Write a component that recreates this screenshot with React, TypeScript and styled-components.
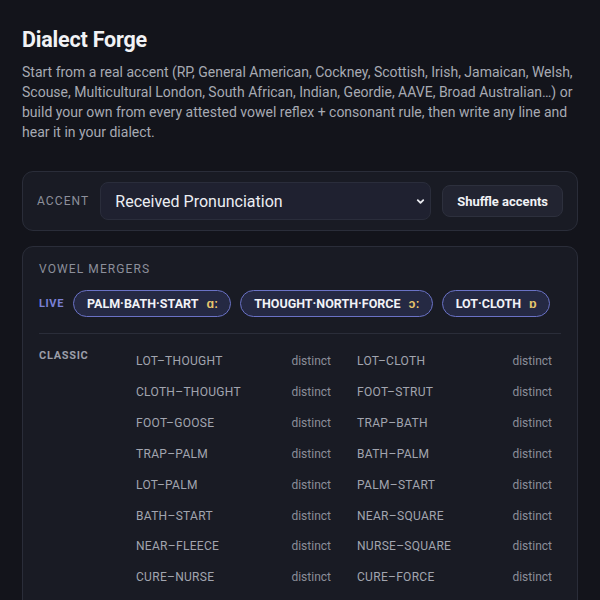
import React from "react";
import styled, { createGlobalStyle } from "styled-components";

const Global = createGlobalStyle`
  html, body { margin: 0; padding: 0; background: #13141b; }
  body { font-family: Roboto, "Liberation Sans", sans-serif; color: #e8e9ee; }
  * { box-sizing: border-box; }
`;

const Page = styled.div`
  padding: 26px 22px 0 22px;
  min-height: 600px;
  background: #13141b;
`;

const Title = styled.h1`
  margin: 0;
  font-size: 21.5px;
  line-height: 28px;
  font-weight: 700;
  color: #f1f2f5;
  letter-spacing: -0.2px;
`;

const Intro = styled.p`
  margin: 8px 0 0 0;
  font-size: 14px;
  line-height: 20px;
  color: #a7aab3;
  max-width: 556px;
`;

const Card = styled.section`
  background: #191b24;
  border: 1px solid #2a2d39;
  border-radius: 11px;
`;

const AccentCard = styled(Card)`
  margin-top: 29px;
  display: flex;
  align-items: center;
  gap: 11px;
  padding: 10px 14px 10px 14px;
`;

const Label = styled.span`
  font-size: 12px;
  letter-spacing: 1.1px;
  color: #8c8f9b;
  text-transform: uppercase;
`;

const SelectBox = styled.div`
  flex: 1;
  height: 38px;
  display: flex;
  align-items: center;
  justify-content: space-between;
  padding: 0 4px 0 14px;
  background: #1f2130;
  border: 1px solid #2a2d3b;
  border-radius: 8px;
  font-size: 16px;
  color: #eceef3;
`;

const Button = styled.button`
  height: 32px;
  padding: 0 14px;
  background: #222431;
  border: 1px solid #2d303d;
  border-radius: 8px;
  font-family: inherit;
  font-size: 13px;
  font-weight: 700;
  color: #f1f2f5;
`;

const MergerCard = styled(Card)`
  margin-top: 15px;
  padding: 15px 16px 20px 16px;
`;

const SectionTitle = styled.div`
  font-size: 12px;
  letter-spacing: 1.1px;
  color: #8c8f9b;
  line-height: 14px;
`;

const LiveRow = styled.div`
  margin-top: 14px;
  display: flex;
  align-items: center;
  gap: 9px;
  padding-bottom: 16px;
  border-bottom: 1px solid #2a2d39;
`;

const LiveTag = styled.span`
  font-size: 11px;
  font-weight: 700;
  letter-spacing: 0.6px;
  color: #7a80d6;
`;

const Pill = styled.span`
  height: 27px;
  display: inline-flex;
  align-items: center;
  gap: 8px;
  padding: 0 12px 0 13px;
  background: #252943;
  border: 1.5px solid #6a72c6;
  border-radius: 14px;
  font-size: 12.5px;
  font-weight: 700;
  letter-spacing: 0;
  color: #f1f2f7;
`;

const Ipa = styled.span`
  color: #e6c56c;
  font-weight: 700;
`;

const Classic = styled.div`
  display: grid;
  grid-template-columns: 97px 1fr;
  padding-top: 12px;
`;

const ClassicLabel = styled.div`
  font-size: 11px;
  font-weight: 700;
  letter-spacing: 0.7px;
  color: #9b9ea9;
  line-height: 14px;
  padding-top: 3px;
`;

const PairGrid = styled.div`
  display: grid;
  grid-template-columns: 195px 195px;
  grid-auto-rows: 30.85px;
  column-gap: 26px;
`;

const Pair = styled.div`
  display: flex;
  align-items: center;
  justify-content: space-between;
  font-size: 12px;
`;

const PairName = styled.span`
  color: #a2a5af;
  letter-spacing: 0.3px;
`;

const Status = styled.span`
  color: #8b8e99;
`;

const pairs: [string, string][] = [
  ["LOT–THOUGHT", "LOT–CLOTH"],
  ["CLOTH–THOUGHT", "FOOT–STRUT"],
  ["FOOT–GOOSE", "TRAP–BATH"],
  ["TRAP–PALM", "BATH–PALM"],
  ["LOT–PALM", "PALM–START"],
  ["BATH–START", "NEAR–SQUARE"],
  ["NEAR–FLEECE", "NURSE–SQUARE"],
  ["CURE–NURSE", "CURE–FORCE"],
];

const live = [
  { name: "PALM·BATH·START", ipa: "ɑː" },
  { name: "THOUGHT·NORTH·FORCE", ipa: "ɔː" },
  { name: "LOT·CLOTH", ipa: "ɒ" },
];

const Chevron = () => (
  <svg width="11" height="11" viewBox="0 0 24 24" fill="none" stroke="#e8e9ee" strokeWidth="4" strokeLinecap="round" strokeLinejoin="round">
    <path d="M6 9l6 6 6-6" />
  </svg>
);

export default function App() {
  return (
    <Page>
      <Global />
      <Title>Dialect Forge</Title>
      <Intro>
        Start from a real accent (RP, General American, Cockney, Scottish, Irish, Jamaican, Welsh,
        Scouse, Multicultural London, South African, Indian, Geordie, AAVE, Broad Australian…) or
        build your own from every attested vowel reflex + consonant rule, then write any line and
        hear it in your dialect.
      </Intro>
      <AccentCard>
        <Label>Accent</Label>
        <SelectBox>
          <span>Received Pronunciation</span>
          <Chevron />
        </SelectBox>
        <Button>Shuffle accents</Button>
      </AccentCard>
      <MergerCard>
        <SectionTitle>VOWEL MERGERS</SectionTitle>
        <LiveRow>
          <LiveTag>LIVE</LiveTag>
          {live.map((p) => (
            <Pill key={p.name}>
              {p.name}
              <Ipa>{p.ipa}</Ipa>
            </Pill>
          ))}
        </LiveRow>
        <Classic>
          <ClassicLabel>CLASSIC</ClassicLabel>
          <PairGrid>
            {pairs.flatMap(([a, b]) => [
              <Pair key={a}>
                <PairName>{a}</PairName>
                <Status>distinct</Status>
              </Pair>,
              <Pair key={b}>
                <PairName>{b}</PairName>
                <Status>distinct</Status>
              </Pair>,
            ])}
          </PairGrid>
        </Classic>
      </MergerCard>
    </Page>
  );
}
